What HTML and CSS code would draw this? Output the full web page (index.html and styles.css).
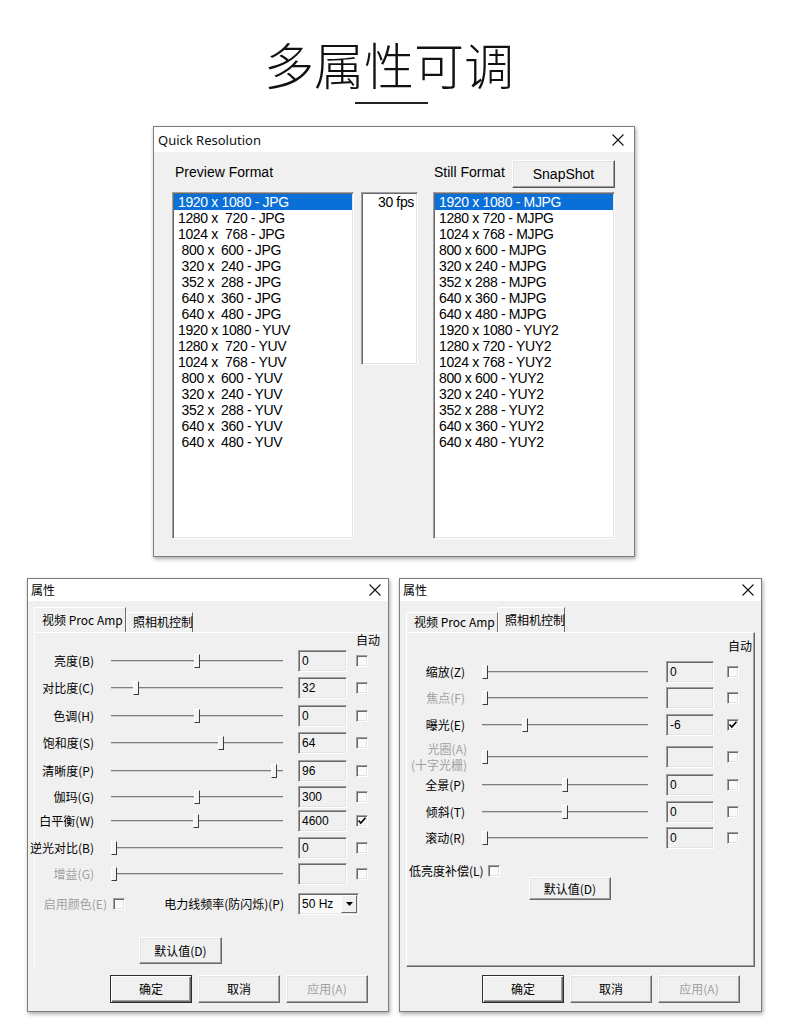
FILE: index.html
```html
<!DOCTYPE html>
<html lang="zh-CN">
<head>
<meta charset="utf-8">
<title>多属性可调</title>
<link rel="stylesheet" href="styles.css">
</head>
<body>
<div class="page">
  <h1 class="headline">多属性可调</h1>
  <div class="headline-rule"></div>

  <section class="win qr">
    <div class="titlebar qr-titlebar">
      <span class="qr-title">Quick Resolution</span>
      <svg class="close" width="12" height="12" viewBox="0 0 12 12"><path d="M0.5 0.5 L11.5 11.5 M11.5 0.5 L0.5 11.5" stroke="#111" stroke-width="1.1" fill="none"/></svg>
    </div>
    <div class="qr-body">
      <div class="qr-head">
        <div class="qr-head-left">Preview Format</div>
        <div class="qr-head-right">
          <span class="still-label">Still Format</span>
          <button class="btn snap">SnapShot</button>
        </div>
      </div>
      <div class="qr-lists">
        <ul class="listbox fmt-list">
          <li class="sel">1920 x 1080 - JPG</li>
          <li>1280 x  720 - JPG</li>
          <li>1024 x  768 - JPG</li>
          <li> 800 x  600 - JPG</li>
          <li> 320 x  240 - JPG</li>
          <li> 352 x  288 - JPG</li>
          <li> 640 x  360 - JPG</li>
          <li> 640 x  480 - JPG</li>
          <li>1920 x 1080 - YUV</li>
          <li>1280 x  720 - YUV</li>
          <li>1024 x  768 - YUV</li>
          <li> 800 x  600 - YUV</li>
          <li> 320 x  240 - YUV</li>
          <li> 352 x  288 - YUV</li>
          <li> 640 x  360 - YUV</li>
          <li> 640 x  480 - YUV</li>
        </ul>
        <div class="listbox fps-box"><div class="fps-item">30 fps</div></div>
        <ul class="listbox fmt-list still-list">
          <li class="sel">1920 x 1080 - MJPG</li>
          <li>1280 x 720 - MJPG</li>
          <li>1024 x 768 - MJPG</li>
          <li>800 x 600 - MJPG</li>
          <li>320 x 240 - MJPG</li>
          <li>352 x 288 - MJPG</li>
          <li>640 x 360 - MJPG</li>
          <li>640 x 480 - MJPG</li>
          <li>1920 x 1080 - YUY2</li>
          <li>1280 x 720 - YUY2</li>
          <li>1024 x 768 - YUY2</li>
          <li>800 x 600 - YUY2</li>
          <li>320 x 240 - YUY2</li>
          <li>352 x 288 - YUY2</li>
          <li>640 x 360 - YUY2</li>
          <li>640 x 480 - YUY2</li>
        </ul>
      </div>
    </div>
  </section>

  <div class="prop-row">
    <!-- Left: 视频 Proc Amp -->
    <section class="win prop pl">
      <div class="titlebar prop-titlebar">
        <span>属性</span>
        <svg class="close" width="12" height="12" viewBox="0 0 12 12"><path d="M0.5 0.5 L11.5 11.5 M11.5 0.5 L0.5 11.5" stroke="#111" stroke-width="1.1" fill="none"/></svg>
      </div>
      <div class="tabbar">
        <div class="tab tab-wide active">视频 Proc Amp</div>
        <div class="tab tab-narrow">照相机控制</div>
      </div>
      <div class="panel panel-flat">
        <div class="rows rows-left">
          <div class="auto-head">自动</div>
          <div class="row">
            <div class="lbl">亮度(B)</div>
            <div class="slider"><i class="thumb" style="left:83px"></i></div>
            <div class="edit">0</div>
            <div class="chk"></div>
          </div>
          <div class="row">
            <div class="lbl">对比度(C)</div>
            <div class="slider"><i class="thumb" style="left:22px"></i></div>
            <div class="edit">32</div>
            <div class="chk"></div>
          </div>
          <div class="row">
            <div class="lbl">色调(H)</div>
            <div class="slider"><i class="thumb" style="left:83px"></i></div>
            <div class="edit">0</div>
            <div class="chk"></div>
          </div>
          <div class="row">
            <div class="lbl">饱和度(S)</div>
            <div class="slider"><i class="thumb" style="left:107px"></i></div>
            <div class="edit">64</div>
            <div class="chk"></div>
          </div>
          <div class="row">
            <div class="lbl">清晰度(P)</div>
            <div class="slider"><i class="thumb" style="left:160px"></i></div>
            <div class="edit">96</div>
            <div class="chk"></div>
          </div>
          <div class="row">
            <div class="lbl">伽玛(G)</div>
            <div class="slider"><i class="thumb" style="left:83px"></i></div>
            <div class="edit">300</div>
            <div class="chk"></div>
          </div>
          <div class="row">
            <div class="lbl">白平衡(W)</div>
            <div class="slider"><i class="thumb" style="left:82px"></i></div>
            <div class="edit">4600</div>
            <div class="chk"><svg width="10" height="10" viewBox="0 0 10 10"><path d="M1.5 4.5 L3.8 7 L8.5 1.8" stroke="#000" stroke-width="1.7" fill="none"/></svg></div>
          </div>
          <div class="row">
            <div class="lbl">逆光对比(B)</div>
            <div class="slider"><i class="thumb" style="left:0px"></i></div>
            <div class="edit">0</div>
            <div class="chk"></div>
          </div>
          <div class="row">
            <div class="lbl dis">增益(G)</div>
            <div class="slider"><i class="thumb" style="left:0px"></i></div>
            <div class="edit"></div>
            <div class="chk"></div>
          </div>
          <div class="row opt-row">
            <div class="lbl opt-label dis">启用颜色(E)</div>
            <div class="chk chk-inline"></div>
            <div class="lbl power-label">电力线频率(防闪烁)(P)</div>
            <div class="combo">
              <span class="combo-val">50 Hz</span>
              <span class="combo-btn"><svg width="7" height="4" viewBox="0 0 7 4"><path d="M0 0 H7 L3.5 4 Z" fill="#000"/></svg></span>
            </div>
          </div>
        </div>
        <button class="btn btn-defaults pl-defaults">默认值(D)</button>
      </div>
      <div class="actions">
        <button class="btn btn-default">确定</button>
        <button class="btn">取消</button>
        <button class="btn dis">应用(A)</button>
      </div>
    </section>

    <!-- Right: 照相机控制 -->
    <section class="win prop pr">
      <div class="titlebar prop-titlebar">
        <span>属性</span>
        <svg class="close" width="12" height="12" viewBox="0 0 12 12"><path d="M0.5 0.5 L11.5 11.5 M11.5 0.5 L0.5 11.5" stroke="#111" stroke-width="1.1" fill="none"/></svg>
      </div>
      <div class="tabbar">
        <div class="tab tab-wide">视频 Proc Amp</div>
        <div class="tab tab-narrow active">照相机控制</div>
      </div>
      <div class="panel">
        <div class="rows rows-right">
          <div class="auto-head">自动</div>
          <div class="row">
            <div class="lbl">缩放(Z)</div>
            <div class="slider"><i class="thumb" style="left:0px"></i></div>
            <div class="edit">0</div>
            <div class="chk"></div>
          </div>
          <div class="row">
            <div class="lbl dis">焦点(F)</div>
            <div class="slider"><i class="thumb" style="left:0px"></i></div>
            <div class="edit"></div>
            <div class="chk"></div>
          </div>
          <div class="row">
            <div class="lbl">曝光(E)</div>
            <div class="slider"><i class="thumb" style="left:40px"></i></div>
            <div class="edit">-6</div>
            <div class="chk"><svg width="10" height="10" viewBox="0 0 10 10"><path d="M1.5 4.5 L3.8 7 L8.5 1.8" stroke="#000" stroke-width="1.7" fill="none"/></svg></div>
          </div>
          <div class="row">
            <div class="lbl lbl-2 dis">光圈(A)<br>(十字光栅)</div>
            <div class="slider"><i class="thumb" style="left:0px"></i></div>
            <div class="edit"></div>
            <div class="chk"></div>
          </div>
          <div class="row">
            <div class="lbl">全景(P)</div>
            <div class="slider"><i class="thumb" style="left:80px"></i></div>
            <div class="edit">0</div>
            <div class="chk"></div>
          </div>
          <div class="row">
            <div class="lbl">倾斜(T)</div>
            <div class="slider"><i class="thumb" style="left:80px"></i></div>
            <div class="edit">0</div>
            <div class="chk"></div>
          </div>
          <div class="row">
            <div class="lbl">滚动(R)</div>
            <div class="slider"><i class="thumb" style="left:0px"></i></div>
            <div class="edit">0</div>
            <div class="chk"></div>
          </div>
        </div>
        <div class="lowlight">
          <span>低亮度补偿(L)</span>
          <div class="chk"></div>
        </div>
        <button class="btn btn-defaults pr-defaults">默认值(D)</button>
      </div>
      <div class="actions">
        <button class="btn btn-default">确定</button>
        <button class="btn">取消</button>
        <button class="btn dis">应用(A)</button>
      </div>
    </section>
  </div>
</div>
</body>
</html>
```

FILE: styles.css
```css
* { box-sizing: border-box; }

html, body {
  margin: 0;
  padding: 0;
  background: #fff;
}

body {
  width: 790px;
  height: 1036px;
  overflow: hidden;
  font-family: "Liberation Sans", Arial, sans-serif;
  color: #000;
}

.page {
  display: flex;
  flex-direction: column;
}

/* ---------- headline ---------- */
.headline {
  margin: 33px 0 0;
  padding-right: 12px;
  text-align: center;
  font-family: "Noto Sans CJK SC", sans-serif;
  font-weight: 300;
  font-size: 50px;
  line-height: 60px;
  color: #111;
}

.headline-rule {
  width: 73px;
  height: 2px;
  margin: 9px 0 0 355px;
  background: #222;
}

/* ---------- generic window ---------- */
.win {
  background: #f0f0f0;
  border: 1px solid #7d7d7d;
  box-shadow: 1px 2px 4px rgba(0, 0, 0, 0.35);
  display: flex;
  flex-direction: column;
}

.titlebar {
  background: #fff;
  display: flex;
  align-items: center;
  justify-content: space-between;
  flex: none;
}

.close { display: block; }

button {
  font: inherit;
  margin: 0;
  padding: 0;
  color: inherit;
}

.btn {
  display: flex;
  align-items: center;
  justify-content: center;
  background: #f0f0f0;
  border: 1px solid;
  border-color: #fff #696969 #696969 #fff;
  box-shadow: inset -1px -1px 0 #a0a0a0, inset 1px 1px 0 #e3e3e3;
  font-family: "Noto Sans CJK SC", sans-serif;
  font-size: 12px;
  line-height: 14px;
  color: #000;
}

.btn-default {
  border-color: #2e2e2e;
  box-shadow: inset 1px 1px 0 #fff, inset -1px -1px 0 #696969, inset -2px -2px 0 #a0a0a0;
}

.btn.dis { color: #a0a0a0; }

/* ---------- Quick Resolution ---------- */
.qr {
  width: 482px;
  height: 431px;
  margin: 22px 0 0 153px;
}

.qr-titlebar {
  height: 25px;
  padding: 0 10px 0 4px;
  font-family: "Noto Sans", sans-serif;
  font-size: 13px;
  color: #111;
}

.qr-body {
  flex: 1;
  padding: 8px 19px 0 18px;
  font-size: 14px;
}

.qr-head {
  display: flex;
  height: 28px;
  margin-bottom: 4px;
}

.qr-head-left {
  width: 261px;
  padding: 4px 0 0 3px;
  line-height: 16px;
}

.qr-head-right {
  display: flex;
  width: 182px;
}

.still-label {
  width: 80px;
  padding: 4px 0 0 1px;
  line-height: 16px;
  white-space: nowrap;
}

.snap {
  width: 103px;
  height: 28px;
  flex: none;
  font-family: "Liberation Sans", Arial, sans-serif;
  font-size: 14px;
  border-color: #fff #555 #555 #fff;
  box-shadow: inset -1px -1px 0 #a0a0a0, inset 1px 1px 0 #e3e3e3;
}

.qr-lists {
  display: flex;
  height: 347px;
}

.listbox {
  margin: 0;
  padding: 1px;
  list-style: none;
  background: #fff;
  border: 1px solid;
  border-color: #a0a0a0 #fff #fff #a0a0a0;
  box-shadow: inset 1px 1px 0 #696969, inset -1px -1px 0 #e3e3e3;
  flex: none;
}

.fmt-list { width: 182px; height: 347px; }

.fmt-list li {
  height: 16px;
  line-height: 16px;
  padding-left: 4px;
  white-space: pre;
  letter-spacing: -0.35px;
}

.fmt-list li.sel {
  background: #0a6fd6;
  color: #fff;
}

.fps-box {
  width: 57px;
  height: 173px;
  margin: 0 15px 0 7px;
}

.fps-item {
  height: 16px;
  line-height: 16px;
  text-align: right;
  padding-right: 2px;
  letter-spacing: -0.35px;
}

/* ---------- property dialogs ---------- */
.prop-row {
  display: flex;
  gap: 10px;
  margin: 21px 0 0 27px;
}

.prop {
  width: 362px;
  height: 434px;
  font-family: "Noto Sans CJK SC", sans-serif;
  font-size: 12px;
}

.prop.pr { width: 363px; }

.prop-titlebar {
  height: 22px;
  padding: 0 7px 0 3px;
  line-height: 14px;
}

.tabbar {
  display: flex;
  align-items: flex-end;
  height: 25px;
  margin: 6px 0 0 6px;
  flex: none;
}

.tab {
  flex: none;
  height: 20px;
  padding-left: 7px;
  line-height: 18px;
  white-space: nowrap;
  border-top: 1px solid #fff;
  border-left: 1px solid #fff;
  border-right: 1px solid #696969;
}

.tab-wide { width: 92px; }
.tab-narrow { width: 67px; padding-left: 6px; }

.tab.active {
  height: 25px;
  padding-top: 3px;
  position: relative;
  z-index: 1;
  background: #f0f0f0;
}

.panel {
  width: 349px;
  height: 335px;
  margin-left: 6px;
  flex: none;
  border-top: 1px solid #fff;
  border-left: 1px solid #fff;
  border-right: 1px solid #696969;
  border-bottom: 1px solid #696969;
  box-shadow: inset -1px -1px 0 #a0a0a0;
  display: flex;
  flex-direction: column;
}

.panel-flat {
  border-right-color: transparent;
  border-bottom-color: transparent;
  box-shadow: none;
}

.rows { display: grid; }

.rows-left {
  grid-template-rows: 15px 27px 28px 27px 28px 26px 24px 27px 26px 30px 26px;
}

.rows-right {
  padding-top: 6px;
  grid-template-rows: 20px 26px 27px 32px 28px 27px 26px 26px;
}

.auto-head {
  height: 14px;
  line-height: 14px;
  text-align: right;
  padding-right: 2px;
}

.row {
  display: flex;
  align-items: center;
  height: 26px;
}

.lbl {
  flex: none;
  display: flex;
  justify-content: flex-end;
  white-space: nowrap;
  line-height: 16px;
}

.lbl-2 {
  display: block;
  text-align: right;
  white-space: normal;
  margin-right: -2px;
}

.pl .lbl { width: 59px; }
.pr .lbl { width: 58px; }
.pr .lbl-2 { width: 60px; }

.dis { color: #a0a0a0; }

.slider {
  position: relative;
  flex: none;
  height: 26px;
  margin-left: 17px;
}

.pl .slider { width: 172px; }
.pr .slider { width: 166px; }

.slider::before {
  content: "";
  position: absolute;
  left: 0;
  right: 0;
  top: 12px;
  height: 2px;
  background: linear-gradient(#7e7e7e 50%, #cfcfcf 50%);
}

.thumb {
  position: absolute;
  top: 6px;
  width: 6px;
  height: 14px;
  background: #f4f4f4;
  border-top: 1px solid #fff;
  border-left: 1px solid #fff;
  border-right: 1px solid #3a3a3a;
  border-bottom: 1px solid #3a3a3a;
}

.edit {
  flex: none;
  height: 22px;
  padding-left: 3px;
  line-height: 20px;
  font-family: "Liberation Sans", Arial, sans-serif;
  font-size: 12px;
  background: #f0f0f0;
  border: 1px solid;
  border-color: #a0a0a0 #fff #fff #a0a0a0;
  box-shadow: inset 1px 1px 0 #696969, inset -1px -1px 0 #e3e3e3;
}

.pl .edit { width: 49px; margin-left: 15px; }
.pr .edit { width: 48px; margin-left: 18px; }

.chk {
  flex: none;
  width: 12px;
  height: 12px;
  display: flex;
  align-items: center;
  justify-content: center;
  background: #fafafa;
  border: 1px solid;
  border-color: #a0a0a0 #fff #fff #a0a0a0;
  box-shadow: inset 1px 1px 0 #696969, inset -1px -1px 0 #e3e3e3;
}

.chk svg { display: block; }

.pl .chk { margin-left: 9px; }
.pr .chk { margin-left: 13px; }

/* options row (left dialog) */
.pl .opt-label { width: 72px; }
.pl .chk-inline { margin-left: 6px; }
.pl .power-label { width: 159px; }

.combo {
  flex: none;
  display: flex;
  align-items: center;
  justify-content: space-between;
  width: 61px;
  height: 22px;
  margin-left: 14px;
  padding: 1px 1px 1px 3px;
  font-family: "Liberation Sans", Arial, sans-serif;
  font-size: 12px;
  background: #fafafa;
  border: 1px solid;
  border-color: #a0a0a0 #fff #fff #a0a0a0;
  box-shadow: inset 1px 1px 0 #696969, inset -1px -1px 0 #e3e3e3;
}

.combo-btn {
  width: 16px;
  height: 18px;
  display: flex;
  align-items: center;
  justify-content: center;
  background: #f0f0f0;
  border: 1px solid;
  border-color: #fff #696969 #696969 #fff;
}

.combo-btn svg { display: block; }

.btn-defaults { flex: none; }

.pl-defaults {
  width: 83px;
  height: 27px;
  margin: 20px 0 0 104px;
}

.lowlight {
  display: flex;
  align-items: center;
  height: 14px;
  margin-top: 13px;
  padding-left: 2px;
  line-height: 14px;
  white-space: nowrap;
}

.pr .lowlight .chk { margin-left: 4px; }

.pr-defaults {
  width: 82px;
  height: 23px;
  margin: -1px 0 0 122px;
}

.actions {
  display: flex;
  justify-content: flex-end;
  gap: 6px;
  margin-top: 8px;
  padding-right: 20px;
  flex: none;
}

.pr .actions { padding-right: 21px; }

.actions .btn {
  width: 82px;
  height: 28px;
}
```
